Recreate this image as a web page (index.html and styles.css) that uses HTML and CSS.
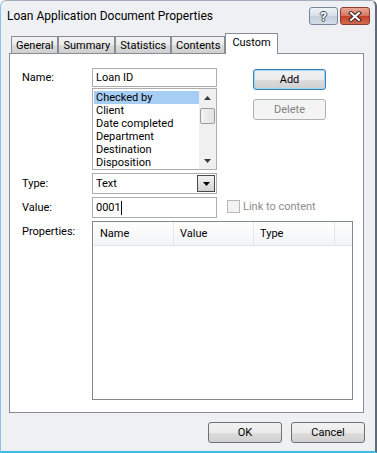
FILE: index.html
```html
<!DOCTYPE html>
<html lang="en">
<head>
  <meta charset="UTF-8">
  <title>Loan Application Document Properties</title>
  <link rel="stylesheet" href="styles.css">
</head>
<body>

<div class="window">
  <div class="titlebar">
    <span class="title">Loan Application Document Properties</span>
    <div class="caption-buttons">
      <div class="cap-btn help">?</div>
      <div class="cap-btn close">
        <svg width="14" height="11" viewBox="0 0 14 11">
          <path d="M3 2 L11 9 M11 2 L3 9" stroke="#3b2420" stroke-width="4" stroke-linecap="square"/>
          <path d="M3 2 L11 9 M11 2 L3 9" stroke="#fff" stroke-width="2" stroke-linecap="square"/>
        </svg>
      </div>
    </div>
  </div>

  <div class="tabs">
    <div class="tab">General</div>
    <div class="tab">Summary</div>
    <div class="tab">Statistics</div>
    <div class="tab">Contents</div>
    <div class="tab active">Custom</div>
  </div>

  <div class="panel">
    <div class="upper">
      <label class="lbl name-lbl">Name:</label>
      <div class="textbox name-box">Loan ID</div>
      <div class="actions">
        <button class="btn default">Add</button>
        <button class="btn" disabled>Delete</button>
      </div>

      <div class="listbox">
        <ul class="items">
          <li class="selected">Checked by</li>
          <li>Client</li>
          <li>Date completed</li>
          <li>Department</li>
          <li>Destination</li>
          <li>Disposition</li>
        </ul>
        <div class="scrollbar">
          <div class="arrow up"><svg width="7" height="4" viewBox="0 0 7 4"><path d="M0 4 L3.5 0 L7 4 Z" fill="#3a3a3a"/></svg></div>
          <div class="track"><div class="thumb"></div></div>
          <div class="arrow down"><svg width="7" height="4" viewBox="0 0 7 4"><path d="M0 0 L3.5 4 L7 0 Z" fill="#3a3a3a"/></svg></div>
        </div>
      </div>

      <label class="lbl type-lbl">Type:</label>
      <div class="combo">
        <span>Text</span>
        <span class="drop"><svg width="7" height="4" viewBox="0 0 7 4"><path d="M0 0 L3.5 4 L7 0 Z" fill="#000"/></svg></span>
      </div>

      <label class="lbl value-lbl">Value:</label>
      <div class="textbox value-box">0001<span class="caret"></span></div>
      <div class="check"><span class="box"></span>Link to content</div>
    </div>

    <div class="props-row">
      <label class="lbl props-lbl">Properties:</label>
      <div class="listview">
        <div class="lv-header">
          <span class="col col-name">Name</span>
          <span class="col col-value">Value</span>
          <span class="col col-type">Type</span>
          <span class="col filler"></span>
        </div>
      </div>
    </div>
  </div>

  <div class="footer">
    <button class="btn">OK</button>
    <button class="btn">Cancel</button>
  </div>
</div>

</body>
</html>
```

FILE: styles.css
```css
* {
  box-sizing: border-box;
}

body {
  margin: 0;
  font-family: Roboto, "Noto Sans", sans-serif;
  font-size: 11px;
  color: #000;
  background: #fff;
}

.window {
  width: 377px;
  height: 453px;
  background: #eef0f3;
  border: 1px solid #a3adb8;
  border-left-color: #86c3e6;
  border-right: 2px solid #5f6a78;
  border-bottom: 2px solid #3cbde9;
  border-radius: 6px 6px 0 0;
  display: flex;
  flex-direction: column;
}

/* title bar */
.titlebar {
  height: 32px;
  display: flex;
  justify-content: space-between;
  padding: 6px 5px 0 6px;
}

.title {
  font-size: 12px;
  line-height: 18px;
}

.caption-buttons {
  display: flex;
  gap: 2px;
}

.cap-btn {
  width: 29px;
  height: 18px;
  border: 1px solid #76869a;
  border-radius: 3px;
  display: flex;
  justify-content: center;
  align-items: center;
}

.help {
  background: linear-gradient(#eef3f8, #d6e0ea 50%, #c3cfdc 51%, #d3dde8);
  color: #fff;
  font-weight: bold;
  font-size: 13px;
  text-shadow: 1px 0 #3e4b5b, -1px 0 #3e4b5b, 0 1px #3e4b5b, 0 -1px #3e4b5b;
}

.close {
  width: 30px;
  border-color: #8a3b2f;
  background: linear-gradient(#e9a896, #d6735d 50%, #c23f27 51%, #d26c52);
}

/* tabs */
.tabs {
  display: flex;
  align-items: flex-end;
  height: 21px;
  padding-left: 10px;
  margin-bottom: -1px;
  position: relative;
  z-index: 1;
}

.tab {
  height: 17px;
  margin-bottom: 1px;
  padding: 0 4px;
  line-height: 17px;
  border: 1px solid #898c95;
  border-bottom: none;
  background: linear-gradient(#f3f3f3, #ebebeb 50%, #dddddd 51%, #cfcfcf);
}

.tab.active {
  height: 21px;
  margin-bottom: 0;
  line-height: 17px;
  padding: 0 6px;
  background: #fff;
}

/* property page */
.panel {
  height: 360px;
  margin: 0 11px 0 8px;
  padding: 14px 0 0 12px;
  background: #fff;
  border: 1px solid #898c95;
}

.upper {
  display: grid;
  grid-template-columns: 70px 125px auto;
  grid-template-rows: 19px 83px 24px 24px;
}

.lbl {
  display: flex;
  align-items: center;
}

.name-lbl { grid-column: 1; grid-row: 1; }
.name-box { grid-column: 2; grid-row: 1; }
.actions { grid-column: 3; grid-row: 1 / 3; }
.listbox { grid-column: 2; grid-row: 2; }
.type-lbl { grid-column: 1; grid-row: 3; padding-top: 3px; }
.combo { grid-column: 2; grid-row: 3; }
.value-lbl { grid-column: 1; grid-row: 4; padding-top: 3px; }
.value-box { grid-column: 2; grid-row: 4; }
.check { grid-column: 3; grid-row: 4; }

.textbox {
  height: 19px;
  border: 1px solid #abadb3;
  padding: 0 3px;
  line-height: 17px;
}

.value-box {
  height: 21px;
  margin-top: 3px;
  line-height: 19px;
  display: flex;
  align-items: center;
}

.caret {
  width: 1px;
  height: 14px;
  background: #000;
}

.listbox {
  margin-top: 1px;
  height: 82px;
  border: 1px solid #abadb3;
  display: flex;
}

.items {
  flex: 1;
  list-style: none;
  margin: 0;
  padding: 2px 0 0 1px;
}

.items li {
  height: 13px;
  line-height: 13px;
  padding-left: 2px;
}

.items li.selected {
  background: #a6cdf3;
}

.scrollbar {
  width: 17px;
  display: flex;
  flex-direction: column;
  background: #f0f0f0;
}

.arrow {
  height: 17px;
  display: flex;
  justify-content: center;
  align-items: center;
}

.track {
  flex: 1;
  padding: 2px 1px 0;
}

.thumb {
  height: 16px;
  border: 1px solid #9b9b9b;
  border-radius: 2px;
  background: linear-gradient(90deg, #f4f4f4, #e2e2e2);
}

.combo {
  margin-top: 3px;
  height: 21px;
  border: 1px solid #abadb3;
  padding: 0 1px 0 3px;
  display: flex;
  justify-content: space-between;
  align-items: center;
}

.drop {
  width: 18px;
  height: 17px;
  border: 1px solid #4a4a4a;
  background: linear-gradient(#f2f2f2, #d4d4d4);
  display: flex;
  justify-content: center;
  align-items: center;
}

.check {
  margin: 6px 0 0 10px;
  display: flex;
  align-items: flex-start;
  gap: 3px;
  color: #8d8d8d;
  line-height: 13px;
}

.check .box {
  width: 13px;
  height: 13px;
  border: 1px solid #b8b8b8;
  background: #f2f2f2;
}

/* buttons */
.btn {
  font-family: Roboto, "Noto Sans", sans-serif;
  font-size: 11px;
  width: 74px;
  height: 21px;
  padding: 0;
  border: 1px solid #707070;
  border-radius: 3px;
  background: linear-gradient(#f2f2f2, #ebebeb 50%, #dddddd 51%, #cfcfcf);
  color: #000;
}

.actions {
  display: flex;
  flex-direction: column;
  gap: 9px;
  padding: 1px 0 0 36px;
}

.btn.default {
  width: 73px;
  border-color: #3c7fb1;
  box-shadow: inset 0 0 0 1px #9ad9f5;
}

.btn:disabled {
  width: 73px;
  border-color: #adb2b5;
  background: #f4f4f4;
  color: #838383;
}

/* custom properties list */
.props-row {
  display: flex;
  margin-top: 3px;
}

.props-lbl {
  width: 70px;
  align-items: flex-start;
  padding-top: 4px;
}

.listview {
  width: 261px;
  height: 179px;
  border: 1px solid #828790;
}

.lv-header {
  display: flex;
  height: 24px;
  border-bottom: 1px solid #e5e5e5;
  background: linear-gradient(#ffffff, #f3f4f6);
}

.col {
  border-right: 1px solid #e3e5e8;
  padding-left: 6px;
  line-height: 23px;
}

.col-name { width: 81px; padding-left: 7px; }
.col-value { width: 80px; }
.col-type { width: 81px; }
.filler { flex: 1; border-right: none; }

/* dialog buttons */
.footer {
  display: flex;
  justify-content: flex-end;
  gap: 9px;
  margin-top: 9px;
  padding-right: 10px;
}
```
